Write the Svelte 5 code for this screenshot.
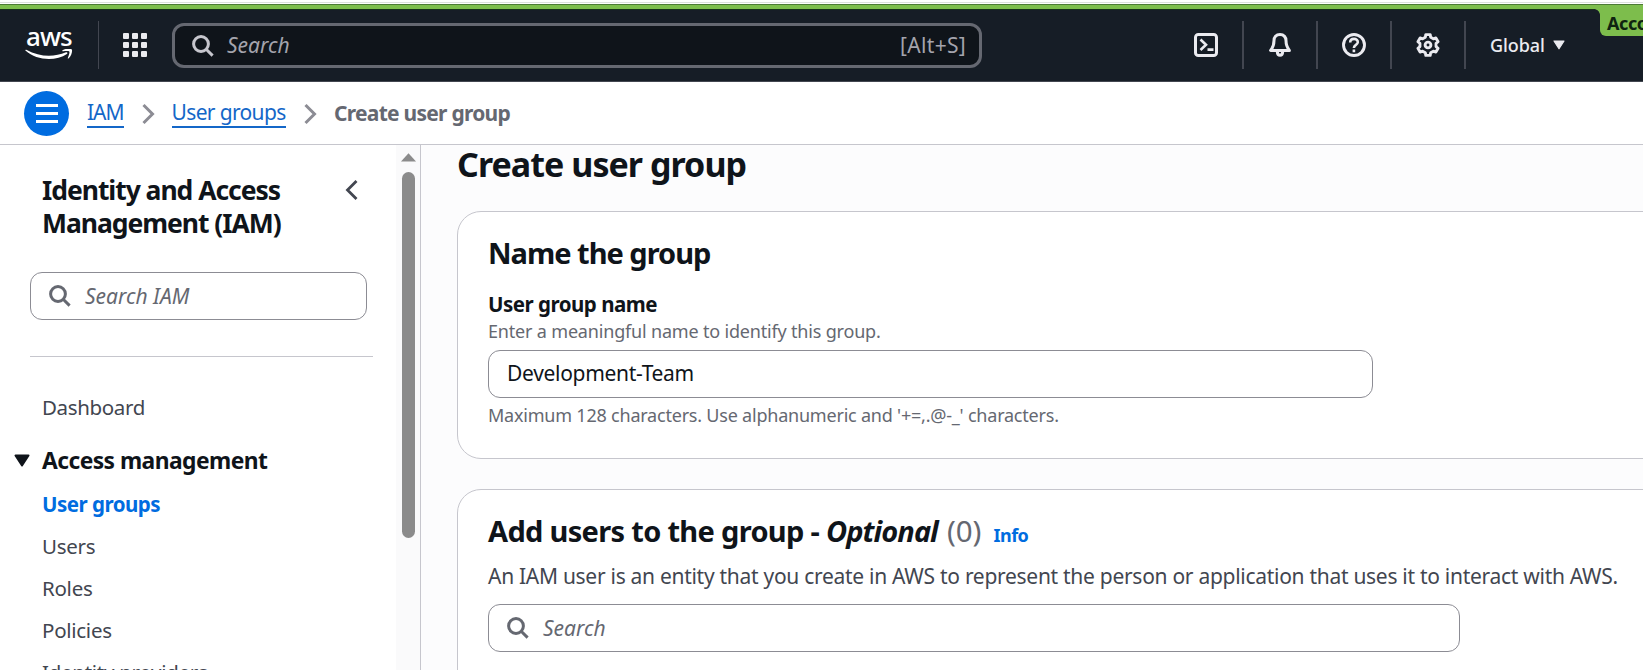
<script>
  const services = Array.from({ length: 9 }, (_, i) => ({ x: (i % 3) * 9, y: Math.floor(i / 3) * 9 }));
  const links = [
    { label: 'User groups', active: true },
    { label: 'Users' },
    { label: 'Roles' },
    { label: 'Policies' },
    { label: 'Identity providers' }
  ];

  // Six-toothed gear outline centred on 12,12
  const gear = Array.from({ length: 6 }, (_, k) => {
    const at = (deg, r) => {
      const a = ((k * 60 - 90 + deg) * Math.PI) / 180;
      return `${(12 + r * Math.cos(a)).toFixed(2)} ${(12 + r * Math.sin(a)).toFixed(2)}`;
    };
    return `${k ? 'L' : 'M'}${at(-12, 10.6)} L${at(12, 10.6)} L${at(19, 8.2)} L${at(41, 8.2)}`;
  }).join(' ') + 'Z';
</script>

{#snippet magnifier()}
  <svg class="magnifier" width="22" height="22" viewBox="0 0 22 22" fill="none" stroke="currentColor" stroke-width="3">
    <circle cx="9" cy="9" r="7.4" />
    <path d="M14.2 14.2 20.6 20.6" />
  </svg>
{/snippet}

{#snippet crumbArrow()}
  <svg class="crumb-arrow" width="14" height="22" viewBox="0 0 14 22" fill="none" stroke="#8c8c94" stroke-width="3">
    <path d="M1.5 2 10.5 11 1.5 20" />
  </svg>
{/snippet}

<div class="page">
  <div class="strip"></div>
  <header class="topbar">
    <div class="brand">
      <span class="aws">aws</span>
      <svg class="smile" width="48" height="12" viewBox="0 0 48 12" fill="#fff">
        <path d="M.4 1.6C0 1 .6.4 1.3.8 15 8.300 29 8.400 41 3.300c1.300-.5 2 .8.9 1.600C31 12.500 12 12 .4 1.600Z" />
        <path d="M37.500 1.200C41-.9 46-.4 46.800.4c.8 1-.2 6.600-3.300 9-.5.4-1 .2-.7-.4.900-2 2.100-5.500 1.500-6.400-.7-.8-4-.5-6.200-.3-.8.100-1-.5-.6-1.100Z" />
      </svg>
    </div>
    <i class="rule first"></i>
    <svg class="grid" width="24" height="24" viewBox="0 0 24 24" fill="#ebebf0">
      {#each services as s}<rect x={s.x} y={s.y} width="6" height="6" rx="1" />{/each}
    </svg>
    <div class="search-top">
      {@render magnifier()}
      <em>Search</em>
      <span class="keys">[Alt+S]</span>
    </div>
    <div class="tools">
      <div class="tool">
        <svg width="24" height="24" viewBox="0 0 24 24" fill="none" stroke="#ebebf0" stroke-width="3">
          <rect x="1.500" y="1.500" width="21" height="21" rx="2.800" />
          <path d="M6.500 6.500 12 11.800 6.500 17M13.500 16.600h6" stroke-width="2.600" />
        </svg>
      </div>
      <div class="tool">
        <svg width="24" height="24" viewBox="0 0 24 24" fill="none" stroke="#ebebf0" stroke-width="3" stroke-linejoin="round">
          <path d="M12 1.600C8 1.600 6 4.300 6 7.600c0 5-1 7-3.400 9.800h18.800C19 14.600 18 12.600 18 7.600 18 4.300 16 1.600 12 1.600Z" />
          <path d="M9.300 18.400c.1 5 5.300 5 5.400 0" />
        </svg>
      </div>
      <div class="tool">
        <svg width="24" height="24" viewBox="0 0 24 24" fill="none" stroke="#ebebf0" stroke-width="2.900">
          <circle cx="12" cy="12" r="10.500" />
          <path d="M8.200 9.600C8.200 4.600 16 4.800 15.800 9.300c-.1 2.700-3.900 2.500-3.900 5.600M11.900 16.400v2.900" stroke-width="2.600" />
        </svg>
      </div>
      <div class="tool">
        <svg width="24" height="24" viewBox="0 0 24 24" fill="none" stroke="#ebebf0" stroke-width="2.900" stroke-linejoin="round">
          <path d={gear} />
          <circle cx="12" cy="12" r="2.900" />
        </svg>
      </div>
      <div class="region">
        <span>Global</span>
        <svg width="12" height="10" viewBox="0 0 12 10"><path d="M1 1h10L6 8.800Z" fill="#ebebf0" stroke="#ebebf0" stroke-linejoin="round" stroke-width="1.200" /></svg>
      </div>
    </div>
    <i class="notch"></i>
    <div class="account"><span>Account</span></div>
  </header>

  <nav class="crumbs">
    <button class="menu" aria-label="Menu">
      <svg width="22" height="19" viewBox="0 0 22 19" stroke="#fff" stroke-width="3"><path d="M0 1.500h22M0 9.500h22M0 17.500h22" /></svg>
    </button>
    <a class="c1" href="#iam">IAM</a>
    {@render crumbArrow()}
    <a class="c2" href="#groups">User groups</a>
    {@render crumbArrow()}
    <strong>Create user group</strong>
  </nav>

  <div class="body">
    <aside>
      <div class="side">
        <div class="side-head">
          <h2>Identity and Access<br />Management (IAM)</h2>
          <svg width="14" height="20" viewBox="0 0 14 20" fill="none" stroke="#424650" stroke-width="2.800"><path d="M11.500 1 2.500 10l9 9" /></svg>
        </div>
        <div class="field side-search">{@render magnifier()}<em>Search IAM</em></div>
        <hr />
        <div class="item dash">Dashboard</div>
        <div class="section">
          <svg width="16" height="13" viewBox="0 0 16 13"><path d="M1.500 1.500h13L8 11.500Z" fill="#0f141a" stroke="#0f141a" stroke-width="2" stroke-linejoin="round" /></svg>
          <span>Access management</span>
        </div>
        {#each links as l}
          <div class="item" class:active={l.active}>{l.label}</div>
        {/each}
      </div>
      <div class="track">
        <svg width="15" height="9" viewBox="0 0 15 9"><path d="M7.500.3 15 8.500H0Z" fill="#8b8b8b" /></svg>
        <div class="thumb"></div>
      </div>
    </aside>

    <main>
      <h1>Create user group</h1>
      <section class="card name">
        <h3>Name the group</h3>
        <div class="label">User group name</div>
        <div class="desc">Enter a meaningful name to identify this group.</div>
        <div class="field name-input">Development-Team</div>
        <div class="hint">Maximum 128 characters. Use alphanumeric and '+=,.@-_' characters.</div>
      </section>
      <section class="card users">
        <div class="title-row">
          <h3>Add users to the group - <em>Optional</em></h3>
          <span class="count">(0)</span>
          <span class="info">Info</span>
        </div>
        <div class="text">An IAM user is an entity that you create in AWS to represent the person or application that uses it to interact with AWS.</div>
        <div class="field user-search">{@render magnifier()}<em>Search</em></div>
      </section>
    </main>
  </div>
</div>

<style>
  :global(body) { background: #fff; overflow: hidden; }
  * { box-sizing: border-box; }
  .page {
    width: 1643px; height: 670px; overflow: hidden;
    display: flex; flex-direction: column;
    font: 21px "Noto Sans", sans-serif;
    color: #0f141a; white-space: nowrap;
  }
  svg { display: block; flex: none; }
  h1, h2, h3, hr { margin: 0; }

  .strip {
    height: 9px; flex: none;
    background: linear-gradient(#fff 0 2px, #dde0dd 2px 3px, #fff 3px 4px, #4c7a35 4px 5px, #7dbd4c 5px 9px);
  }
  .topbar {
    height: 73px; flex: none; position: relative;
    display: flex; align-items: flex-start;
    background: #161d26; border-top: 1px solid #16301a; border-bottom: 1px solid #424650;
    color: #ebebf0;
  }
  .brand { width: 73px; height: 70px; padding: 14px 0 0 25px; display: flex; flex-direction: column; }
  .aws { height: 25px; line-height: 25px; font-size: 26px; font-weight: 500; color: #fff; padding-left: 1px; letter-spacing: -.9px; }
  .rule.first { width: 1px; height: 48px; margin: 11px 0 0 25px; background: #424650; }
  .grid { margin: 23px 0 0 24px; }
  .search-top {
    width: 810px; height: 45px; margin: 13px 0 0 25px; padding: 0 13px 0 17px;
    display: flex; align-items: center;
    border: 3px solid #656871; border-radius: 12px; background: #0f141a;
  }
  .search-top em { margin: -2px 0 0 13px; color: #a4a4ad; }
  .search-top .magnifier { color: #c6c6cd; }
  .keys { margin: -2px 0 0 auto; color: #a4a4ad; letter-spacing: .3px; }
  .tools { display: flex; margin: 11px 0 0 187px; height: 48px; align-items: center; }
  .tool { width: 74px; height: 48px; padding-left: 24px; display: flex; align-items: center; border-right: 2px solid #424650; }
  .tool:first-child { width: 75px; padding-left: 25px; }
  .region { display: flex; align-items: center; gap: 8px; padding: 0 0 1px 24px; font-size: 18px; font-weight: 500; letter-spacing: -.1px; }
  .account {
    position: absolute; right: 0; top: -1px; width: 43px; height: 27px; overflow: hidden;
    background: #7dbd4c; border-bottom-left-radius: 6px; color: #0f2410;
    font-size: 18px; font-weight: 700; line-height: 29px; padding-left: 7px; letter-spacing: -.4px;
  }
  .notch {
    position: absolute; right: 43px; top: -1px; width: 6px; height: 6px;
    background: radial-gradient(circle at 0 100%, #161d26 5.500px, #7dbd4c 6.200px);
  }

  .crumbs {
    height: 63px; flex: none; display: flex; align-items: center;
    padding: 1px 0 0 24px; border-bottom: 1px solid #c6c6cd; color: #656871;
  }
  .menu {
    width: 45px; height: 45px; margin-right: 18px; padding: 0; border: 0; border-radius: 50%;
    background: #006ce0; display: flex; align-items: center; justify-content: center;
  }
  .crumbs a { color: #1467c8; text-decoration: none; line-height: 25px; border-bottom: 2px solid #1467c8; height: 28px; margin-top: 1px; }
  .c1 { letter-spacing: -1px; }
  .c2 { letter-spacing: -.66px; }
  .crumbs strong { letter-spacing: -.74px; margin: -2px 0 0 .5px; }
  .crumb-arrow { margin: 0 16px 0 18px; }

  .body { flex: 1; min-height: 0; display: flex; }
  aside { width: 421px; flex: none; display: flex; border-right: 1px solid #c6c6cd; overflow: hidden; }
  .side { width: 396px; flex: none; padding-top: 29px; }
  .side-head { display: flex; height: 66px; padding: 0 37px 0 42px; justify-content: space-between; }
  .side-head svg { margin-top: 6px; }
  h2 { font-size: 26.500px; line-height: 33px; font-weight: 700; letter-spacing: -1.050px; }
  .field {
    height: 48px; border: 1px solid #8c8c94; border-radius: 12px; background: #fff;
    display: flex; align-items: center; padding-left: 18px;
  }
  .field em { color: #656871; margin: -1px 0 0 14px; }
  .magnifier { color: #656871; }
  .side-search { width: 337px; margin: 32px 0 0 30px; }
  hr { width: 343px; height: 1px; margin: 36px 0 29px 30px; border: 0; background: #c6c6cd; }
  .item { height: 42px; line-height: 42px; padding-left: 42px; font-size: 20.500px; letter-spacing: -.27px; color: #424650; }
  .item.dash { letter-spacing: -.35px; }
  .item.active { color: #006ce0; font-weight: 700; letter-spacing: -.5px; }
  .section { height: 43px; margin: 11px 0 1px; padding-left: 14px; display: flex; align-items: center; gap: 12px; font-size: 22.800px; font-weight: 700; letter-spacing: -.55px; }
  .track { width: 24px; background: #fafafb; display: flex; flex-direction: column; align-items: center; padding-top: 8px; }
  .track svg { margin-left: 1px; }
  .thumb { width: 13px; height: 366px; margin: 10px 0 0 1px; border-radius: 7px; background: #8b8b8b; }

  main { flex: 1; min-width: 0; background: #fcfcfd; padding-left: 36px; overflow: hidden; }
  h1 { font-size: 34px; line-height: 38px; font-weight: 700; margin-bottom: 28px; letter-spacing: -.95px; }
  .card {
    width: 1300px; border: 1px solid #c6c6cd; border-radius: 24px; background: #fff;
    padding: 22px 30px 0; margin-bottom: 30px;
  }
  .card.name { height: 248px; }
  .card.users { height: 300px; }
  h3 { font-size: 29px; line-height: 37px; font-weight: 700; letter-spacing: -1px; }
  .label { font-size: 20.500px; font-weight: 700; line-height: 26px; margin-top: 20px; letter-spacing: -.5px; }
  .desc { font-size: 18px; line-height: 26px; margin-top: 1px; color: #656871; letter-spacing: -.18px; }
  .name-input { width: 885px; margin-top: 6px; padding-bottom: 2px; letter-spacing: -.3px; }
  .hint { font-size: 18px; line-height: 24px; margin-top: 5px; color: #656871; letter-spacing: -.215px; }
  .title-row { display: flex; align-items: baseline; }
  .users h3 { letter-spacing: -.68px; }
  h3 em { letter-spacing: -.93px; }
  .count { font-size: 29.500px; line-height: 37px; margin-left: 9px; color: #656871; }
  .info { font-size: 18px; font-weight: 700; color: #006ce0; margin-left: 12px; letter-spacing: -.5px; }
  .text { line-height: 26px; margin-top: 14px; color: #424650; letter-spacing: -.285px; }
  .user-search { width: 972px; margin-top: 15px; }
</style>
